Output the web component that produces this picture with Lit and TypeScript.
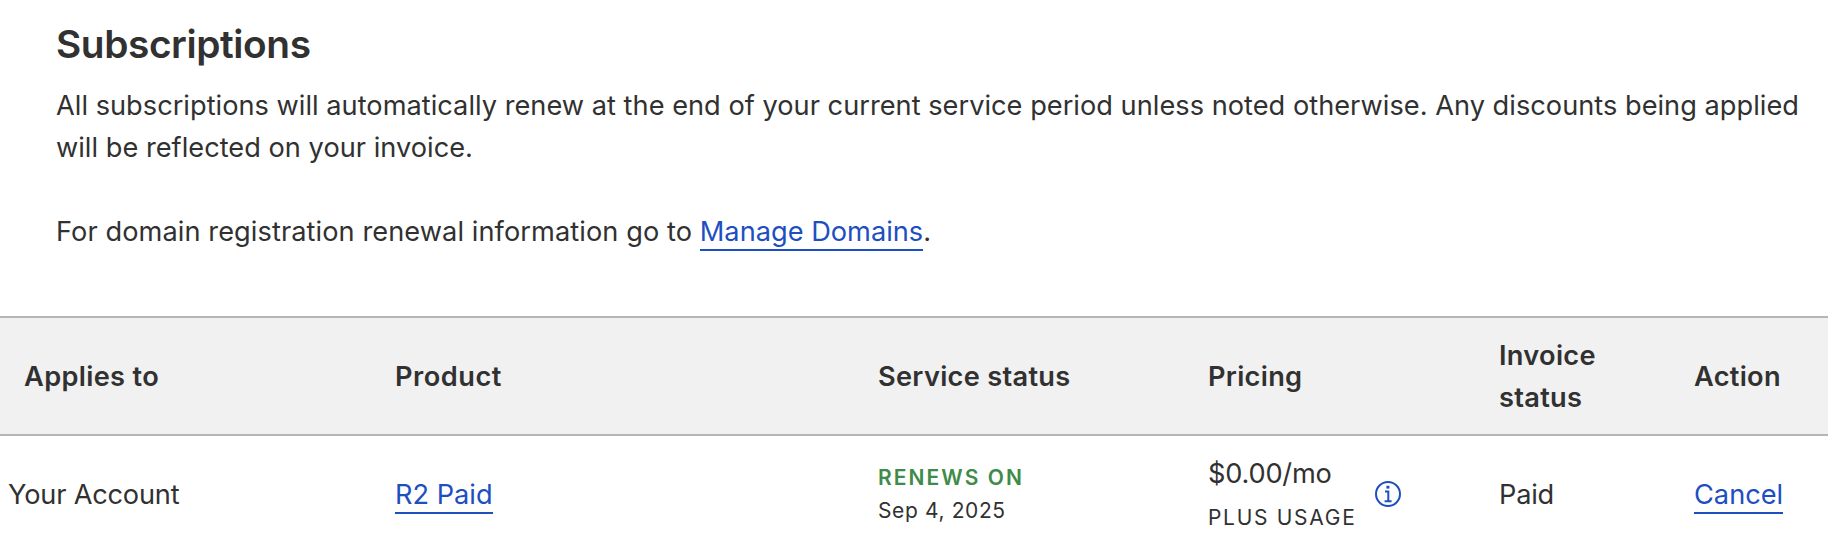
import { LitElement, html, css } from "lit";
import { customElement } from "lit/decorators.js";

@customElement("app-root")
class AppRoot extends LitElement {
  static styles = css`
    :host { display: block; height: 542px; overflow: hidden; background: #fff; color: #313131; font: 27.2px/42px Inter, sans-serif; white-space: nowrap; }
    .intro { padding: 19px 0 0 56px; height: 316px; box-sizing: border-box; }
    h2 { margin: 0 0 16px; font-size: 38.8px; line-height: 50px; font-weight: 600; letter-spacing: -0.4px; }
    p { margin: 0 0 42px; letter-spacing: 0.018px; }
    .domains { letter-spacing: 0.075px; }
    .domains a { letter-spacing: 0; }
    a { color: #1d4fc0; border-bottom: 2px solid #1d4fc0; padding-bottom: 1px; }
    .row { display: grid; grid-template-columns: 370px 483px 330px 291px 195px 1fr; align-items: center; padding-left: 25px; }
    .head { height: 120px; box-sizing: border-box; border-top: 2px solid #b6b6b6; border-bottom: 2px solid #b6b6b6; background: #f1f1f1; font-weight: 600; padding-top: 2px; letter-spacing: 0.3px; }
    .head .first { margin-left: -1px; letter-spacing: 0.35px; }
    .head .product { letter-spacing: 0.5px; }
    .body { height: 118px; letter-spacing: -0.2px; }
    .body a { letter-spacing: 0; }
    .acct { margin-left: -17px; }
    .status { margin-top: -2px; }
    .renew { font-size: 21px; line-height: 33px; font-weight: 600; letter-spacing: 2.05px; color: #3f8b4a; }
    .date { font-size: 21px; line-height: 33px; letter-spacing: 0.62px; }
    .price { display: flex; align-items: center; gap: 20px; }
    .amount { width: 147px; }
    .plus { font-size: 21px; line-height: 46px; margin-bottom: -4px; letter-spacing: 1.7px; }
    svg { display: block; margin-top: -2px; }
  `;
  render() {
    return html`
      <section class="intro">
        <h2>Subscriptions</h2>
        <p>All subscriptions will automatically renew at the end of your current service period unless noted otherwise. Any discounts being applied<br>will be reflected on your invoice.</p>
        <p class="domains">For domain registration renewal information go to <a>Manage Domains</a>.</p>
      </section>
      <div class="row head"><div class="first">Applies to</div><div class="product">Product</div><div>Service status</div><div>Pricing</div><div>Invoice<br>status</div><div>Action</div></div>
      <div class="row body">
        <div class="acct">Your Account</div>
        <div><a>R2 Paid</a></div>
        <div class="status"><div class="renew">RENEWS ON</div><div class="date">Sep 4, 2025</div></div>
        <div class="price">
          <div class="amount"><div>$0.00/mo</div><div class="plus">PLUS USAGE</div></div>
          <svg width="26" height="26" viewBox="0 0 26 26" fill="none" stroke="#1d4fc0">
            <circle cx="13" cy="13" r="12" stroke-width="2"/>
            <path d="M10 10.4H13.3V20.2M9.6 20.2H16.6" stroke-width="2"/>
            <path d="M11.4 6.2H14.4" stroke-width="2.8"/>
          </svg>
        </div>
        <div>Paid</div>
        <div><a>Cancel</a></div>
      </div>`;
  }
}
